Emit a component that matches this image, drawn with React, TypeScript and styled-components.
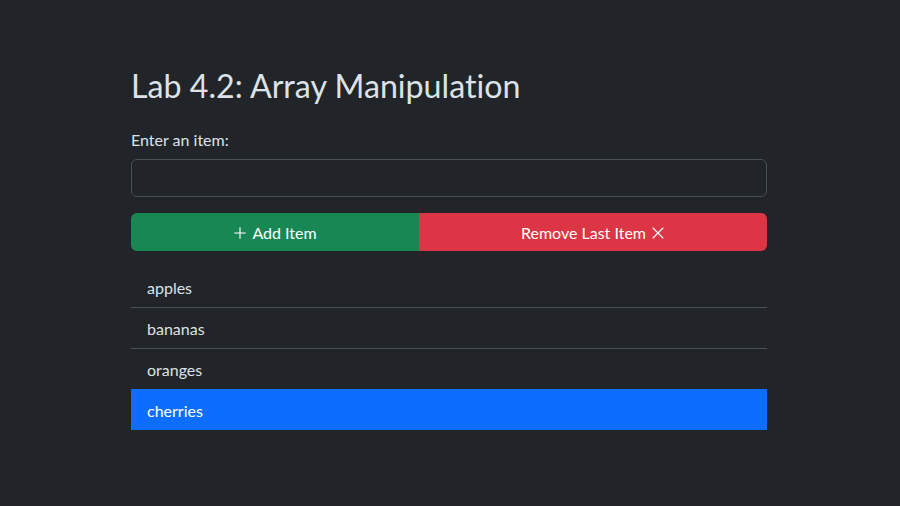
import React from "react";
import styled, { createGlobalStyle } from "styled-components";

const Global = createGlobalStyle`
  html, body { margin: 0; padding: 0; background: #212529; }
  body {
    color: #dee2e6;
    font-family: Lato, "Open Sans", "Liberation Sans", sans-serif;
    font-size: 16px;
    line-height: 1.5;
    font-variant-ligatures: none;
  }
  * { box-sizing: border-box; }
`;

const Page = styled.main`
  width: 636px;
  margin: 0 auto 0 131px;
  padding-top: 64px;
`;

const Title = styled.h1`
  margin: 0 0 21px;
  font-size: 32.2px;
  font-weight: 400;
  line-height: 43px;
  color: #dee2e6;
`;

const Label = styled.label`
  display: block;
  font-size: 16px;
  line-height: 24px;
  margin-bottom: 7px;
`;

const Input = styled.input`
  display: block;
  width: 100%;
  height: 38px;
  background: #212529;
  border: 1px solid #495057;
  border-radius: 6px;
  color: #dee2e6;
  padding: 6px 12px;
  font: inherit;
  margin-bottom: 16px;
  outline: none;
`;

const ButtonGroup = styled.div`
  display: flex;
  height: 38px;
  border-radius: 6px;
  overflow: hidden;
  margin-bottom: 16px;
`;

const Button = styled.button<{ $bg: string; $basis?: string }>`
  flex: ${(p) => (p.$basis ? `0 0 ${p.$basis}` : "1 1 auto")};
  display: flex;
  align-items: center;
  justify-content: center;
  gap: 5px;
  border: none;
  background: ${(p) => p.$bg};
  color: #fff;
  font: inherit;
  font-size: 16px;
  padding: 7px 12px 6px;
  cursor: pointer;
`;

const List = styled.ul`
  list-style: none;
  margin: 0;
  padding: 0;
`;

const Item = styled.li<{ $active?: boolean }>`
  padding: 9px 16px 7px;
  font-size: 16px;
  line-height: 24px;
  border-bottom: 1px solid #495057;
  background: ${(p) => (p.$active ? "#0d6efd" : "transparent")};
  border-color: ${(p) => (p.$active ? "#0d6efd" : "#495057")};
  color: ${(p) => (p.$active ? "#fff" : "#dee2e6")};
  &:last-child { border-bottom: none; height: 41px; padding-top: 10px; }
  ${(p) => (p.$active ? "margin-top: -1px;" : "")}
`;

const PlusIcon = () => (
  <svg width="14" height="14" viewBox="0 0 16 16" fill="none" stroke="currentColor" strokeWidth="1.3">
    <path d="M8 1.5v13M1.5 8h13" />
  </svg>
);

const XIcon = () => (
  <svg width="14" height="14" viewBox="0 0 16 16" fill="none" stroke="currentColor" strokeWidth="1.3">
    <path d="M2 2l12 12M14 2L2 14" />
  </svg>
);

const items = ["apples", "bananas", "oranges", "cherries"];

export default function App() {
  return (
    <>
      <Global />
      <Page>
        <Title>Lab 4.2: Array Manipulation</Title>
        <Label htmlFor="item">Enter an item:</Label>
        <Input id="item" type="text" />
        <ButtonGroup>
          <Button $bg="#198754" $basis="288px">
            <PlusIcon /> Add Item
          </Button>
          <Button $bg="#dc3545">
            Remove Last Item <XIcon />
          </Button>
        </ButtonGroup>
        <List>
          {items.map((it, i) => (
            <Item key={it} $active={i === items.length - 1}>
              {it}
            </Item>
          ))}
        </List>
      </Page>
    </>
  );
}
